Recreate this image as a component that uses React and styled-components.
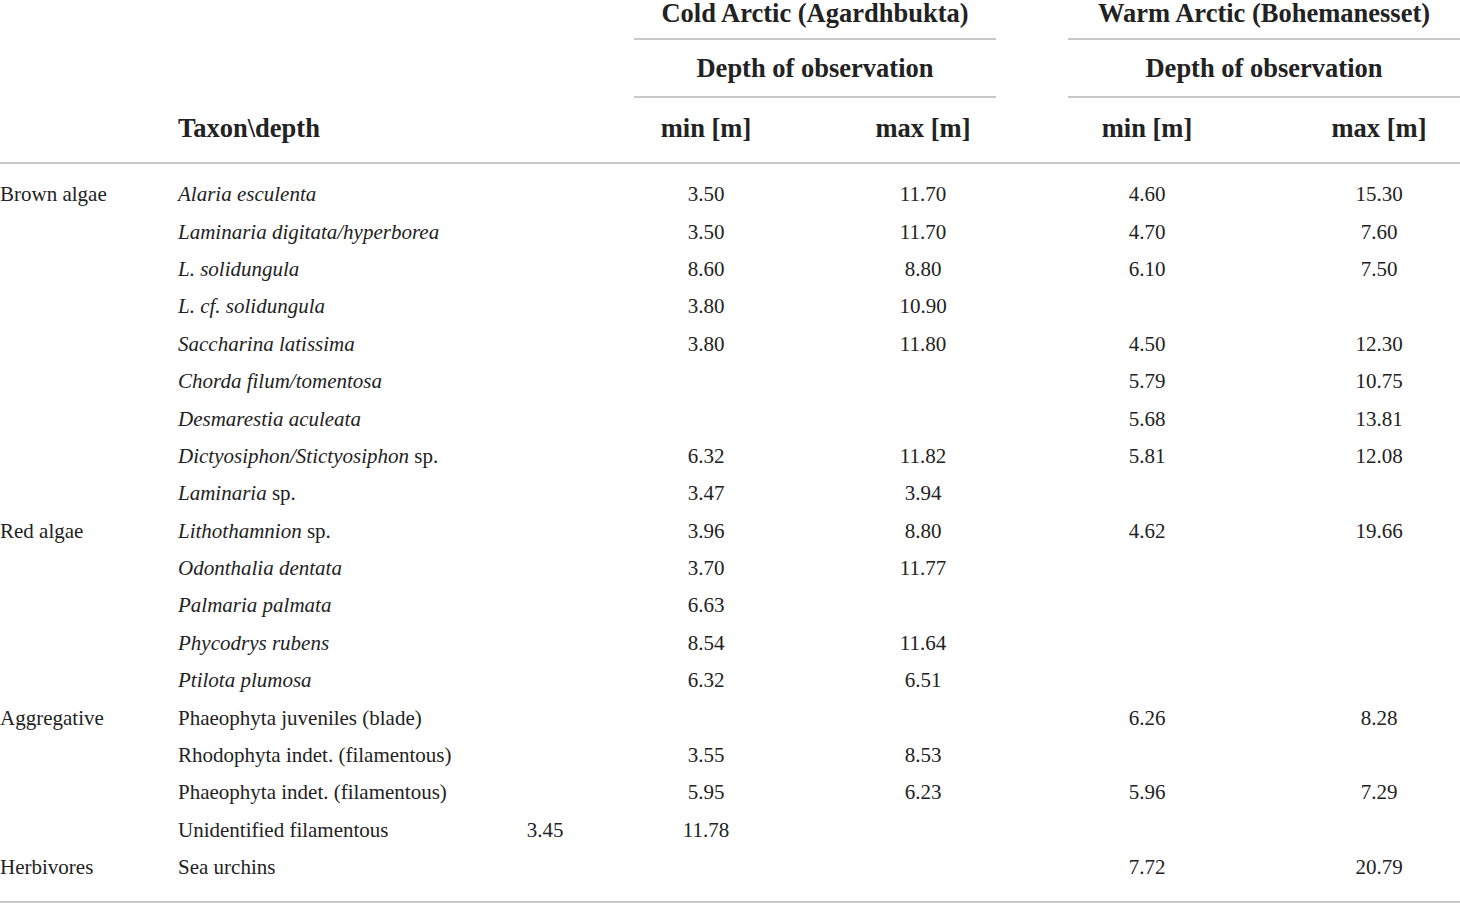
import React from "react";
import styled, { createGlobalStyle } from "styled-components";

const GlobalStyle = createGlobalStyle`
  html, body {
    margin: 0;
    padding: 0;
    background: #fff;
  }
  body {
    font-family: "Liberation Serif", "Times New Roman", serif;
    color: #222;
  }
`;

// 11 tracks: category, taxon, stray column, then the two site groups with spacers
const COLUMNS =
  "178px 312px 110px 34px 144px 72px 146px 72px 158px 72px 162px";

const Table = styled.div`
  width: 1460px;
  display: flex;
  flex-direction: column;
`;

const Row = styled.div`
  display: grid;
  grid-template-columns: ${COLUMNS};
  align-items: stretch;
`;

const HeadRow = styled(Row)`
  font-weight: bold;
  font-size: 26.5px;
  border-bottom: ${p => (p.$ruled ? "2px solid #c8c8c8" : "none")};
`;

const GroupCell = styled.div`
  grid-column: ${p => p.$span};
  text-align: center;
  line-height: ${p => p.$lh}px;
  padding: ${p => p.$pad};
  border-bottom: 2px solid #c8c8c8;
  white-space: nowrap;
`;

const HeadCell = styled.div`
  grid-column: ${p => p.$col};
  text-align: ${p => (p.$left ? "left" : "center")};
  line-height: 24px;
  padding: 18px 0 22px;
  white-space: nowrap;
`;

const Body = styled.div`
  padding: 12px 0 15px;
  border-bottom: 2px solid #c8c8c8;
`;

const DataRow = styled(Row)`
  height: 37.4px;
  font-size: 21px;
  align-items: center;
`;

const Cell = styled.div`
  grid-column: ${p => p.$col};
  text-align: ${p => (p.$left ? "left" : "center")};
  white-space: nowrap;
`;

const Species = styled.span`
  font-style: italic;
`;

const rows = [
  { group: "Brown algae", taxon: ["Alaria esculenta"], v: ["3.50", "11.70", "4.60", "15.30"] },
  { taxon: ["Laminaria digitata/hyperborea"], v: ["3.50", "11.70", "4.70", "7.60"] },
  { taxon: ["L. solidungula"], v: ["8.60", "8.80", "6.10", "7.50"] },
  { taxon: ["L. cf. solidungula"], v: ["3.80", "10.90"] },
  { taxon: ["Saccharina latissima"], v: ["3.80", "11.80", "4.50", "12.30"] },
  { taxon: ["Chorda filum/tomentosa"], v: ["", "", "5.79", "10.75"] },
  { taxon: ["Desmarestia aculeata"], v: ["", "", "5.68", "13.81"] },
  { taxon: ["Dictyosiphon/Stictyosiphon", "sp."], v: ["6.32", "11.82", "5.81", "12.08"] },
  { taxon: ["Laminaria", "sp."], v: ["3.47", "3.94"] },
  { group: "Red algae", taxon: ["Lithothamnion", "sp."], v: ["3.96", "8.80", "4.62", "19.66"] },
  { taxon: ["Odonthalia dentata"], v: ["3.70", "11.77"] },
  { taxon: ["Palmaria palmata"], v: ["6.63"] },
  { taxon: ["Phycodrys rubens"], v: ["8.54", "11.64"] },
  { taxon: ["Ptilota plumosa"], v: ["6.32", "6.51"] },
  { group: "Aggregative", plain: "Phaeophyta juveniles (blade)", v: ["", "", "6.26", "8.28"] },
  { plain: "Rhodophyta indet. (filamentous)", v: ["3.55", "8.53"] },
  { plain: "Phaeophyta indet. (filamentous)", v: ["5.95", "6.23", "5.96", "7.29"] },
  { plain: "Unidentified filamentous", stray: "3.45", v: ["11.78"] },
  { group: "Herbivores", plain: "Sea urchins", v: ["", "", "7.72", "20.79"] }
];

const valueCols = [5, 7, 9, 11];

function Taxon({ row }) {
  if (row.plain) return row.plain;
  const [name, suffix] = row.taxon;
  return (
    <>
      <Species>{name}</Species>
      {suffix ? ` ${suffix}` : null}
    </>
  );
}

export default function App() {
  return (
    <>
      <GlobalStyle />
      <Table>
        <HeadRow>
          <GroupCell $span="5 / 8" $lh={26} $pad="0 0 12px">
            Cold Arctic (Agardhbukta)
          </GroupCell>
          <GroupCell $span="9 / 12" $lh={26} $pad="0 0 12px">
            Warm Arctic (Bohemanesset)
          </GroupCell>
        </HeadRow>
        <HeadRow>
          <GroupCell $span="5 / 8" $lh={22} $pad="17px 0">
            Depth of observation
          </GroupCell>
          <GroupCell $span="9 / 12" $lh={22} $pad="17px 0">
            Depth of observation
          </GroupCell>
        </HeadRow>
        <HeadRow $ruled>
          <HeadCell $col={2} $left>
            Taxon\depth
          </HeadCell>
          <HeadCell $col={5}>min [m]</HeadCell>
          <HeadCell $col={7}>max [m]</HeadCell>
          <HeadCell $col={9}>min [m]</HeadCell>
          <HeadCell $col={11}>max [m]</HeadCell>
        </HeadRow>
        <Body>
          {rows.map((row, i) => (
            <DataRow key={i}>
              <Cell $col={1} $left>
                {row.group || ""}
              </Cell>
              <Cell $col={2} $left>
                <Taxon row={row} />
              </Cell>
              {row.stray && <Cell $col={3}>{row.stray}</Cell>}
              {row.v.map((val, j) => (
                <Cell key={j} $col={valueCols[j]}>
                  {val}
                </Cell>
              ))}
            </DataRow>
          ))}
        </Body>
      </Table>
    </>
  );
}
